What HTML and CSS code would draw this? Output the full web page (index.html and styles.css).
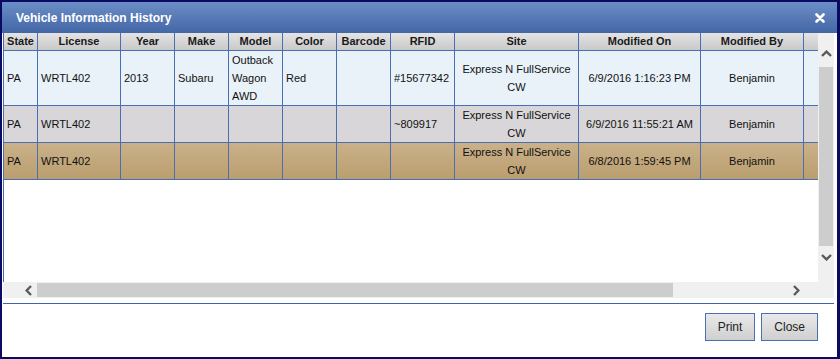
FILE: index.html
```html
<!DOCTYPE html>
<html lang="en">
<head>
  <meta charset="UTF-8">
  <title>Vehicle Information History</title>
  <link rel="stylesheet" href="styles.css">
</head>
<body>
  <div class="dialog">
    <div class="dialog-title">
      <span>Vehicle Information History</span>
      <svg class="close-icon" width="10" height="10" viewBox="0 0 10 10">
        <path d="M1.5 1.5 L8.5 8.5 M8.5 1.5 L1.5 8.5" stroke="#fff" stroke-width="2.6" stroke-linecap="round"/>
      </svg>
    </div>

    <div class="grid">
      <div class="grid-body">
        <div class="grid-view">
          <table class="history">
            <colgroup>
              <col class="c-state">
              <col class="c-license">
              <col class="c-small">
              <col class="c-small">
              <col class="c-small">
              <col class="c-small">
              <col class="c-small">
              <col class="c-rfid">
              <col class="c-site">
              <col class="c-modon">
              <col class="c-modby">
              <col class="c-filler">
            </colgroup>
            <thead>
              <tr>
                <th>State</th>
                <th>License</th>
                <th>Year</th>
                <th>Make</th>
                <th>Model</th>
                <th>Color</th>
                <th>Barcode</th>
                <th>RFID</th>
                <th>Site</th>
                <th>Modified On</th>
                <th>Modified By</th>
                <th class="filler"></th>
              </tr>
            </thead>
            <tbody>
              <tr class="row-current">
                <td>PA</td>
                <td>WRTL402</td>
                <td>2013</td>
                <td>Subaru</td>
                <td>Outback Wagon AWD</td>
                <td>Red</td>
                <td></td>
                <td>#15677342</td>
                <td class="center">Express N FullService CW</td>
                <td class="center">6/9/2016 1:16:23 PM</td>
                <td class="center">Benjamin</td>
                <td class="filler"></td>
              </tr>
              <tr class="row-alt">
                <td>PA</td>
                <td>WRTL402</td>
                <td></td>
                <td></td>
                <td></td>
                <td></td>
                <td></td>
                <td>~809917</td>
                <td class="center">Express N FullService CW</td>
                <td class="center">6/9/2016 11:55:21 AM</td>
                <td class="center">Benjamin</td>
                <td class="filler"></td>
              </tr>
              <tr class="row-selected">
                <td>PA</td>
                <td>WRTL402</td>
                <td></td>
                <td></td>
                <td></td>
                <td></td>
                <td></td>
                <td></td>
                <td class="center">Express N FullService CW</td>
                <td class="center">6/8/2016 1:59:45 PM</td>
                <td class="center">Benjamin</td>
                <td class="filler"></td>
              </tr>
            </tbody>
          </table>
        </div>

        <!-- vertical scrollbar -->
        <div class="vscroll">
          <div class="sb-btn vs-up">
            <svg width="11" height="7" viewBox="0 0 11 7"><path d="M1 6 L5.5 1.6 L10 6" fill="none" stroke="#5a5a5a" stroke-width="2.4"/></svg>
          </div>
          <div class="vs-thumb"></div>
          <div class="sb-btn vs-down">
            <svg width="11" height="7" viewBox="0 0 11 7"><path d="M1 1 L5.5 5.4 L10 1" fill="none" stroke="#5a5a5a" stroke-width="2.4"/></svg>
          </div>
        </div>
      </div>

      <!-- horizontal scrollbar -->
      <div class="hscroll">
        <div class="sb-btn hs-left">
          <svg width="7" height="11" viewBox="0 0 7 11"><path d="M6 1 L1.6 5.5 L6 10" fill="none" stroke="#5a5a5a" stroke-width="2.4"/></svg>
        </div>
        <div class="hs-thumb"></div>
        <div class="hs-track"></div>
        <div class="sb-btn hs-right">
          <svg width="7" height="11" viewBox="0 0 7 11"><path d="M1 1 L5.4 5.5 L1 10" fill="none" stroke="#5a5a5a" stroke-width="2.4"/></svg>
        </div>
      </div>
    </div>

    <div class="dialog-buttons">
      <button type="button">Print</button>
      <button type="button">Close</button>
    </div>
  </div>
</body>
</html>
```

FILE: styles.css
```css
body {
  margin: 0;
  font-family: "Liberation Sans", Arial, sans-serif;
  background: #fff;
}
.dialog {
  width: 840px;
  height: 359px;
  box-sizing: border-box;
  border: 2px solid #0b0b63;
  border-right-width: 3px;
  background: #fff;
}
.dialog-title {
  height: 31px;
  display: flex;
  align-items: center;
  justify-content: space-between;
  padding: 0 12px 0 14px;
  background: linear-gradient(#6c8ec6, #4366a6);
  color: #fff;
  font-size: 12px;
  font-weight: bold;
}
.close-icon {
  display: block;
  margin-top: 1px;
}

/* grid */
.grid {
  width: 831px;
  margin-left: 1px;
}
.grid-body {
  display: flex;
  height: 249px;
  border-left: 1px solid #4a6eb4;
}
.grid-view {
  width: 814px;
  background: #fff;
}
.history {
  width: 814px;
  table-layout: fixed;
  border-collapse: separate;
  border-spacing: 0;
  font-size: 11px;
  color: #111;
}
.c-state { width: 34px; }
.c-license { width: 83px; }
.c-small { width: 54px; }
.c-rfid { width: 64px; }
.c-site { width: 124px; }
.c-modon { width: 122px; }
.c-modby { width: 103px; }
.c-filler { width: 14px; }
.history th,
.history td {
  padding: 0 3px;
  border-right: 1px solid #4a6eb4;
  border-bottom: 1px solid #4a6eb4;
  line-height: 18px;
  vertical-align: middle;
  text-align: left;
  overflow: hidden;
}
.history th {
  line-height: 17px;
  font-weight: bold;
  text-align: center;
  white-space: nowrap;
  background: linear-gradient(#e4e4e4, #c9c9c9);
  color: #1a1a1a;
}
.history .filler {
  border-right: none;
}
.history td.center {
  text-align: center;
}
.row-current td {
  background: #e9f1f9;
}
.row-alt td {
  background: #d8d6d9;
}
.row-selected td {
  background: linear-gradient(#cab18a, #ba9e6e);
}

/* scrollbars */
.sb-btn {
  display: flex;
  align-items: center;
  justify-content: center;
}
.vscroll {
  width: 16px;
  background: #f0f0f0;
  display: flex;
  flex-direction: column;
  padding-top: 12px;
  box-sizing: border-box;
}
.vs-up,
.vs-down {
  height: 17px;
}
.vs-thumb {
  height: 179px;
  margin: 5px 1px 3px;
  background: #cdcdcd;
}
.hscroll {
  display: flex;
  height: 16px;
  background: #f0f0f0;
}
.hs-left,
.hs-right {
  width: 17px;
}
.hs-left {
  margin-left: 17px;
}
.hs-thumb {
  width: 636px;
  margin: 1px 0;
  background: #cdcdcd;
}
.hs-track {
  flex: 1;
}
.hs-right {
  margin-right: 29px;
}

/* buttons */
.dialog-buttons {
  margin: 5px 0 0 1px;
  width: 831px;
  border-top: 1px solid #3f63ad;
  padding-top: 9px;
  display: flex;
  justify-content: flex-end;
  gap: 6px;
  box-sizing: border-box;
  padding-right: 16px;
}
.dialog-buttons button {
  height: 28px;
  padding: 0 12px;
  font-family: inherit;
  font-size: 12px;
  color: #222;
  background: linear-gradient(#e9e9e9, #cfcfcf);
  border: 1px solid #4a6eb4;
  border-radius: 0;
  cursor: pointer;
}
.dialog-buttons button:hover {
  background: linear-gradient(#f2f2f2, #dadada);
}
```
